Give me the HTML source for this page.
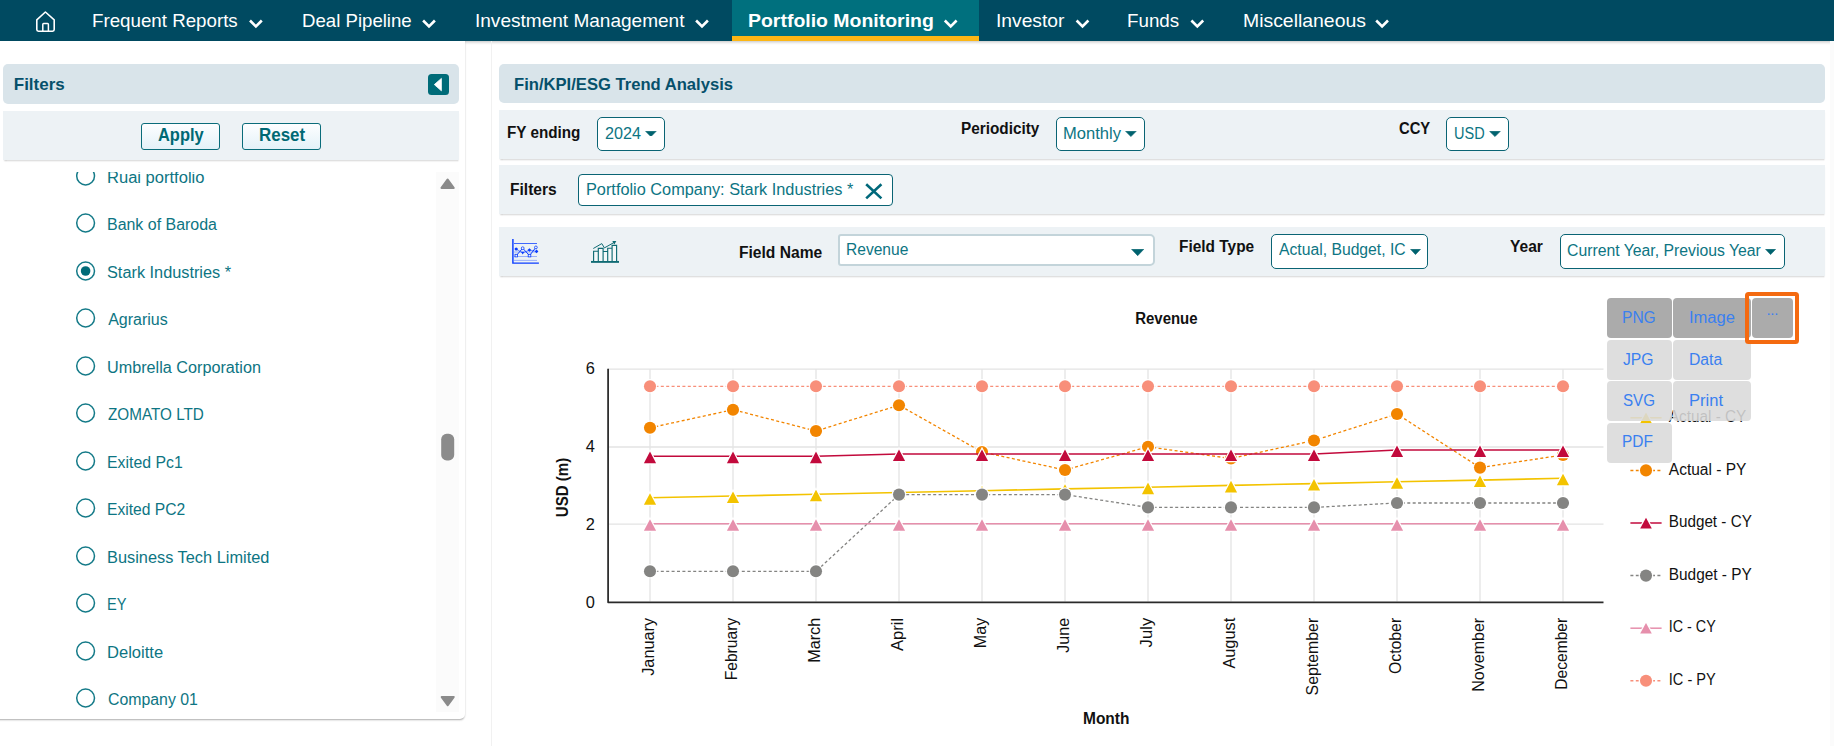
<!DOCTYPE html>
<html lang="en"><head><meta charset="utf-8"><title>Fin/KPI/ESG Trend Analysis</title>
<style>
html,body{margin:0;padding:0;background:#fff;}
body{width:1834px;height:746px;position:relative;overflow:hidden;font-family:"Liberation Sans", sans-serif;}
.tx{position:absolute;white-space:nowrap;z-index:2;transform-origin:0 0;}
.z3{z-index:5;}
.abs{position:absolute;box-sizing:border-box;}
#nav{left:0;top:0;width:1834px;height:40.6px;background:#004a61;box-shadow:0 1px 3px rgba(0,0,0,.25);}
#act{left:732px;top:0;width:247px;height:40.6px;background:#00707e;}
#actb{left:732px;top:36px;width:247px;height:4.7px;background:#fcb614;}
.hdr{background:#d9e4ea;border-radius:5px;}
.bar{background:#edf2f5;box-shadow:0 1.5px 1.5px -0.5px rgba(0,0,0,.2);}
.sel{background:#fff;border:1.5px solid #0a6474;border-radius:5px;}
.btn{border:1.3px solid #0a6c7a;border-radius:3px;background:linear-gradient(#fdfeff,#e4f1f8);}
.mi{border-radius:4px;z-index:4;}
</style></head><body>
<div id="nav" class="abs"></div><div id="act" class="abs"></div><div id="actb" class="abs"></div>
<svg width="1834" height="42" viewBox="0 0 1834 42" style="position:absolute;left:0;top:0"><path d="M36.8 19.8L45.4 12L54.2 19.8V29.6Q54.2 31.2 52.6 31.2H38.4Q36.8 31.2 36.8 29.6Z" fill="none" stroke="#fff" stroke-width="1.6" stroke-linejoin="round"/><path d="M42.8 31V24.4Q42.8 23.6 43.6 23.6H47.6Q48.4 23.6 48.4 24.4V31" fill="none" stroke="#fff" stroke-width="1.5"/><path d="M250.0 20.5L255.9 26.4L261.8 20.5" fill="none" stroke="#fff" stroke-width="2.6" stroke-linejoin="miter"/><path d="M423.1 20.5L429.0 26.4L434.9 20.5" fill="none" stroke="#fff" stroke-width="2.6" stroke-linejoin="miter"/><path d="M696.1 20.5L702.0 26.4L707.9 20.5" fill="none" stroke="#fff" stroke-width="2.6" stroke-linejoin="miter"/><path d="M944.8 20.5L950.7 26.4L956.6 20.5" fill="none" stroke="#fff" stroke-width="2.6" stroke-linejoin="miter"/><path d="M1076.6 20.5L1082.5 26.4L1088.4 20.5" fill="none" stroke="#fff" stroke-width="2.6" stroke-linejoin="miter"/><path d="M1191.4 20.5L1197.3 26.4L1203.2 20.5" fill="none" stroke="#fff" stroke-width="2.6" stroke-linejoin="miter"/><path d="M1376.2 20.5L1382.1 26.4L1388.0 20.5" fill="none" stroke="#fff" stroke-width="2.6" stroke-linejoin="miter"/></svg>
<!-- left panel -->
<div class="abs" style="left:-4px;top:41px;width:469.3px;height:677.6px;background:#fff;border-radius:0 0 5px 0;box-shadow:0 2px 2px -1px rgba(0,0,0,.32), 1px 0 1.5px rgba(0,0,0,.06);"></div>
<div class="abs hdr" style="left:3px;top:64px;width:456.3px;height:39.8px;"></div>
<div class="abs" style="left:428px;top:74px;width:21.2px;height:21.2px;background:#006b78;border-radius:3.5px;"><svg width="21" height="21" viewBox="0 0 21 21" style="position:absolute;left:0;top:0"><path d="M13.4 4.4V16.8L6.3 10.6Z" fill="#fff" stroke="#fff" stroke-width="0.8" stroke-linejoin="round"/></svg></div>
<div class="abs bar" style="left:3px;top:110.8px;width:456.3px;height:49.2px;"></div>
<div class="abs btn" style="left:141px;top:123px;width:78.8px;height:26.8px;"></div>
<div class="abs btn" style="left:242.2px;top:123px;width:78.7px;height:26.8px;"></div>
<div id="list" class="abs" style="left:0;top:172px;width:436px;height:540px;overflow:hidden;">
<div class="abs" style="left:0;top:-172px;width:459px;height:746px;">
<svg style="position:absolute;left:75px;top:164.95px" width="22" height="22" viewBox="0 0 22 22"><circle cx="10.6" cy="11" r="8.9" fill="#fff" stroke="#147a88" stroke-width="1.5"/></svg><svg style="position:absolute;left:75px;top:212.45px" width="22" height="22" viewBox="0 0 22 22"><circle cx="10.6" cy="11" r="8.9" fill="#fff" stroke="#147a88" stroke-width="1.5"/></svg><svg style="position:absolute;left:75px;top:259.95px" width="22" height="22" viewBox="0 0 22 22"><circle cx="10.6" cy="11" r="8.9" fill="#fff" stroke="#147a88" stroke-width="1.5"/><circle cx="10.6" cy="11" r="4.8" fill="#006b78"/></svg><svg style="position:absolute;left:75px;top:307.45px" width="22" height="22" viewBox="0 0 22 22"><circle cx="10.6" cy="11" r="8.9" fill="#fff" stroke="#147a88" stroke-width="1.5"/></svg><svg style="position:absolute;left:75px;top:354.95px" width="22" height="22" viewBox="0 0 22 22"><circle cx="10.6" cy="11" r="8.9" fill="#fff" stroke="#147a88" stroke-width="1.5"/></svg><svg style="position:absolute;left:75px;top:402.45px" width="22" height="22" viewBox="0 0 22 22"><circle cx="10.6" cy="11" r="8.9" fill="#fff" stroke="#147a88" stroke-width="1.5"/></svg><svg style="position:absolute;left:75px;top:449.95px" width="22" height="22" viewBox="0 0 22 22"><circle cx="10.6" cy="11" r="8.9" fill="#fff" stroke="#147a88" stroke-width="1.5"/></svg><svg style="position:absolute;left:75px;top:497.45px" width="22" height="22" viewBox="0 0 22 22"><circle cx="10.6" cy="11" r="8.9" fill="#fff" stroke="#147a88" stroke-width="1.5"/></svg><svg style="position:absolute;left:75px;top:544.95px" width="22" height="22" viewBox="0 0 22 22"><circle cx="10.6" cy="11" r="8.9" fill="#fff" stroke="#147a88" stroke-width="1.5"/></svg><svg style="position:absolute;left:75px;top:592.45px" width="22" height="22" viewBox="0 0 22 22"><circle cx="10.6" cy="11" r="8.9" fill="#fff" stroke="#147a88" stroke-width="1.5"/></svg><svg style="position:absolute;left:75px;top:639.95px" width="22" height="22" viewBox="0 0 22 22"><circle cx="10.6" cy="11" r="8.9" fill="#fff" stroke="#147a88" stroke-width="1.5"/></svg><svg style="position:absolute;left:75px;top:687.45px" width="22" height="22" viewBox="0 0 22 22"><circle cx="10.6" cy="11" r="8.9" fill="#fff" stroke="#147a88" stroke-width="1.5"/></svg>
<span id="l0" class="tx" style="left:106.80px;top:169.81px;font-size:16px;line-height:16px;color:#0d7583;transform:scaleX(1.0336);">Ruai portfolio</span><span id="l1" class="tx" style="left:106.80px;top:216.71px;font-size:16px;line-height:16px;color:#0d7583;transform:scaleX(0.9967);">Bank of Baroda</span><span id="l2" class="tx" style="left:107.16px;top:264.86px;font-size:16px;line-height:16px;color:#0d7583;transform:scaleX(1.0184);">Stark Industries *</span><span id="l3" class="tx" style="left:108.20px;top:311.76px;font-size:16px;line-height:16px;color:#0d7583;">Agrarius</span><span id="l4" class="tx" style="left:106.90px;top:359.76px;font-size:16px;line-height:16px;color:#0d7583;transform:scaleX(1.0122);">Umbrella Corporation</span><span id="l5" class="tx" style="left:107.64px;top:406.81px;font-size:16px;line-height:16px;color:#0d7583;transform:scaleX(0.9541);">ZOMATO LTD</span><span id="l6" class="tx" style="left:106.80px;top:454.96px;font-size:16px;line-height:16px;color:#0d7583;transform:scaleX(0.9897);">Exited Pc1</span><span id="l7" class="tx" style="left:106.80px;top:502.46px;font-size:16px;line-height:16px;color:#0d7583;transform:scaleX(0.9776);">Exited PC2</span><span id="l8" class="tx" style="left:106.80px;top:549.96px;font-size:16px;line-height:16px;color:#0d7583;transform:scaleX(1.0219);">Business Tech Limited</span><span id="l9" class="tx" style="left:106.80px;top:597.36px;font-size:16px;line-height:16px;color:#0d7583;transform:scaleX(0.9155);">EY</span><span id="l10" class="tx" style="left:106.80px;top:644.96px;font-size:16px;line-height:16px;color:#0d7583;transform:scaleX(1.0341);">Deloitte</span><span id="l11" class="tx" style="left:107.74px;top:692.26px;font-size:16px;line-height:16px;color:#0d7583;transform:scaleX(0.9912);">Company 01</span>
</div></div>
<div class="abs" style="left:436.2px;top:172px;width:22.6px;height:539.7px;background:#fbfbfb;"></div>
<svg class="abs" style="left:436px;top:171px" width="24" height="548" viewBox="0 0 24 548"><path d="M5.6 17L11.6 8.6L17.6 17Z" fill="#8b8b8b" stroke="#8b8b8b" stroke-width="2.2" stroke-linejoin="round"/><path d="M5.8 526L11.7 534L17.6 526Z" fill="#8b8b8b" stroke="#8b8b8b" stroke-width="2.2" stroke-linejoin="round"/><rect x="5.2" y="262.8" width="13" height="26.6" rx="5.5" fill="#8b8b8b"/></svg>
<!-- right panel -->
<div class="abs" style="left:491.2px;top:41px;width:1px;height:705px;background:#f1f1f1;"></div>
<div class="abs" style="left:1829.7px;top:41px;width:5px;height:705px;background:#fbfbfb;"></div>
<div class="abs hdr" style="left:499px;top:64px;width:1326px;height:38.8px;"></div>
<div class="abs bar" style="left:499px;top:110.2px;width:1326px;height:48.4px;"></div>
<div class="abs bar" style="left:499px;top:165.2px;width:1326px;height:48.6px;"></div>
<div class="abs bar" style="left:499px;top:227.3px;width:1326px;height:48.4px;"></div>
<div class="abs sel" style="left:597px;top:117.2px;width:67.8px;height:33.5px;"></div><svg style="position:absolute;left:645.2px;top:130.6px" width="11.8" height="5.8" viewBox="0 0 11.8 5.8"><path d="M0.6 0.3H11.2L5.9 5.6Z" fill="#00626e" stroke="#00626e" stroke-width="0.6" stroke-linejoin="round"/></svg>
<div class="abs sel" style="left:1056.1px;top:117px;width:88.7px;height:33.8px;"></div><svg style="position:absolute;left:1125.3px;top:131.1px" width="11.8" height="5.8" viewBox="0 0 11.8 5.8"><path d="M0.6 0.3H11.2L5.9 5.6Z" fill="#00626e" stroke="#00626e" stroke-width="0.6" stroke-linejoin="round"/></svg>
<div class="abs sel" style="left:1446.1px;top:117px;width:62.8px;height:33.8px;"></div><svg style="position:absolute;left:1489.1px;top:131.1px" width="11.9" height="5.8" viewBox="0 0 11.9 5.8"><path d="M0.6 0.3H11.3L6.0 5.6Z" fill="#00626e" stroke="#00626e" stroke-width="0.6" stroke-linejoin="round"/></svg>
<div class="abs sel" style="left:578.3px;top:174px;width:314.5px;height:31.6px;border-width:1.4px;border-radius:4px;"></div>
<svg class="abs" style="left:864px;top:182px" width="20" height="18" viewBox="0 0 20 18"><path d="M2.2 2.2L17.4 16.4M17.4 2.2L2.2 16.4" stroke="#00687a" stroke-width="2.6" stroke-linecap="butt"/></svg>
<div class="abs" style="left:838px;top:234.2px;width:317px;height:32.3px;background:#fff;border:2px solid #c3d4da;border-radius:3px 5px 5px 3px;"></div><svg style="position:absolute;left:1130.6px;top:249.4px" width="13.4" height="6.9" viewBox="0 0 13.4 6.9"><path d="M0.6 0.3H12.8L6.7 6.7Z" fill="#00626e" stroke="#00626e" stroke-width="0.6" stroke-linejoin="round"/></svg>
<div class="abs sel" style="left:1271.1px;top:234px;width:156.9px;height:34.8px;"></div><svg style="position:absolute;left:1409.5px;top:248.8px" width="11.1" height="5.8" viewBox="0 0 11.1 5.8"><path d="M0.6 0.3H10.5L5.5 5.6Z" fill="#00626e" stroke="#00626e" stroke-width="0.6" stroke-linejoin="round"/></svg>
<div class="abs sel" style="left:1560.3px;top:234px;width:224.6px;height:34.8px;"></div><svg style="position:absolute;left:1765.4px;top:248.8px" width="11.2" height="5.8" viewBox="0 0 11.2 5.8"><path d="M0.6 0.3H10.6L5.6 5.6Z" fill="#00626e" stroke="#00626e" stroke-width="0.6" stroke-linejoin="round"/></svg>
<!-- chart type icons -->
<svg class="abs" style="left:510px;top:237px" width="31" height="29" viewBox="510 237 31 29"><path d="M512.9 239V263.1H538.9" fill="none" stroke="#0b3dff" stroke-width="1.45"/><path d="M514 243.5H537" stroke="#0b3dff" stroke-width="0.9" opacity=".85"/><path d="M514 252H537M514 256.5H537M514 260.4H537" stroke="#0b3dff" stroke-width="0.8" opacity=".45"/><path d="M516.3 255.6L522.7 248.2L529.5 255.6L535.9 247.4" fill="none" stroke="#0b3dff" stroke-width="1"/><path d="M516.2 249L522.7 253L529.4 250L536.6 251.4" fill="none" stroke="#0b3dff" stroke-width="0.8" opacity=".7"/><rect x="515" y="254.3" width="2.6" height="2.6" fill="#eef3f6" stroke="#0b3dff" stroke-width=".8"/><rect x="528.2" y="254.3" width="2.6" height="2.6" fill="#eef3f6" stroke="#0b3dff" stroke-width=".8"/><circle cx="522.7" cy="248.2" r="1.4" fill="#eef3f6" stroke="#0b3dff" stroke-width=".8"/><circle cx="535.9" cy="247.4" r="1.4" fill="#eef3f6" stroke="#0b3dff" stroke-width=".8"/><circle cx="516.2" cy="249" r="1.6" fill="#0b3dff"/><path d="M521 251.8H524.4L522.7 254.4Z" fill="#0b3dff"/><path d="M529.4 248.2L531.2 250L529.4 251.8L527.6 250Z" fill="#0b3dff"/><path d="M536.6 249.6L538.4 251.4L536.6 253.2L534.8 251.4Z" fill="#0b3dff"/></svg>
<svg class="abs" style="left:590px;top:239px" width="30" height="26" viewBox="590 239 30 26"><path d="M591 261.9H619" stroke="#0f6b73" stroke-width="1.9"/><path d="M593.6 261V251.2H598.3V261M598.3 261V248.3H603.1V261M603.1 261V251.5H607.7V261M607.7 261V248.2H612.1V261M612.1 261V245.3H616.6V261" fill="#f4f8f9" stroke="#0f6b73" stroke-width="1.15"/><path d="M593.3 248.5L601.8 243.6L604.4 247.9L614.4 242.3" fill="none" stroke="#0f6b73" stroke-width="1"/><path d="M612.3 241L616.3 241.1L614.4 244.4Z" fill="#0f6b73"/></svg>
<svg id="chart" width="1834" height="746" viewBox="0 0 1834 746" style="position:absolute;left:0;top:0;z-index:1" font-family="Liberation Sans, sans-serif">
<line x1="608" y1="369.1" x2="1603.5" y2="369.1" stroke="#e3e3e3" stroke-width="1.3"/>
<line x1="608" y1="447.0" x2="1603.5" y2="447.0" stroke="#e3e3e3" stroke-width="1.3"/>
<line x1="608" y1="524.1" x2="1603.5" y2="524.1" stroke="#e3e3e3" stroke-width="1.3"/>
<line x1="650" y1="369" x2="650" y2="601.5" stroke="#e3e3e3" stroke-width="1.3"/>
<line x1="733" y1="369" x2="733" y2="601.5" stroke="#e3e3e3" stroke-width="1.3"/>
<line x1="816" y1="369" x2="816" y2="601.5" stroke="#e3e3e3" stroke-width="1.3"/>
<line x1="899" y1="369" x2="899" y2="601.5" stroke="#e3e3e3" stroke-width="1.3"/>
<line x1="982" y1="369" x2="982" y2="601.5" stroke="#e3e3e3" stroke-width="1.3"/>
<line x1="1065" y1="369" x2="1065" y2="601.5" stroke="#e3e3e3" stroke-width="1.3"/>
<line x1="1148" y1="369" x2="1148" y2="601.5" stroke="#e3e3e3" stroke-width="1.3"/>
<line x1="1231" y1="369" x2="1231" y2="601.5" stroke="#e3e3e3" stroke-width="1.3"/>
<line x1="1314" y1="369" x2="1314" y2="601.5" stroke="#e3e3e3" stroke-width="1.3"/>
<line x1="1397" y1="369" x2="1397" y2="601.5" stroke="#e3e3e3" stroke-width="1.3"/>
<line x1="1480" y1="369" x2="1480" y2="601.5" stroke="#e3e3e3" stroke-width="1.3"/>
<line x1="1563" y1="369" x2="1563" y2="601.5" stroke="#e3e3e3" stroke-width="1.3"/>
<polyline points="650.0,497.8 733.0,496.0 816.0,494.3 899.0,492.5 982.0,490.7 1065.0,488.9 1148.0,487.2 1231.0,485.4 1314.0,483.6 1397.0,481.8 1480.0,480.1 1563.0,478.3" fill="none" stroke="#f3c300" stroke-width="1.6"/>
<path d="M650.0 493.2L656.1 504.8L643.9 504.8Z" fill="#f3c300" stroke="#fff" stroke-width="2.4" paint-order="stroke" stroke-linejoin="miter"/>
<path d="M733.0 491.4L739.1 503.0L726.9 503.0Z" fill="#f3c300" stroke="#fff" stroke-width="2.4" paint-order="stroke" stroke-linejoin="miter"/>
<path d="M816.0 489.7L822.1 501.3L809.9 501.3Z" fill="#f3c300" stroke="#fff" stroke-width="2.4" paint-order="stroke" stroke-linejoin="miter"/>
<path d="M899.0 487.9L905.1 499.5L892.9 499.5Z" fill="#f3c300" stroke="#fff" stroke-width="2.4" paint-order="stroke" stroke-linejoin="miter"/>
<path d="M982.0 486.1L988.1 497.7L975.9 497.7Z" fill="#f3c300" stroke="#fff" stroke-width="2.4" paint-order="stroke" stroke-linejoin="miter"/>
<path d="M1065.0 484.3L1071.1 495.9L1058.9 495.9Z" fill="#f3c300" stroke="#fff" stroke-width="2.4" paint-order="stroke" stroke-linejoin="miter"/>
<path d="M1148.0 482.6L1154.1 494.2L1141.9 494.2Z" fill="#f3c300" stroke="#fff" stroke-width="2.4" paint-order="stroke" stroke-linejoin="miter"/>
<path d="M1231.0 480.8L1237.1 492.4L1224.9 492.4Z" fill="#f3c300" stroke="#fff" stroke-width="2.4" paint-order="stroke" stroke-linejoin="miter"/>
<path d="M1314.0 479.0L1320.1 490.6L1307.9 490.6Z" fill="#f3c300" stroke="#fff" stroke-width="2.4" paint-order="stroke" stroke-linejoin="miter"/>
<path d="M1397.0 477.2L1403.1 488.8L1390.9 488.8Z" fill="#f3c300" stroke="#fff" stroke-width="2.4" paint-order="stroke" stroke-linejoin="miter"/>
<path d="M1480.0 475.5L1486.1 487.1L1473.9 487.1Z" fill="#f3c300" stroke="#fff" stroke-width="2.4" paint-order="stroke" stroke-linejoin="miter"/>
<path d="M1563.0 473.7L1569.1 485.3L1556.9 485.3Z" fill="#f3c300" stroke="#fff" stroke-width="2.4" paint-order="stroke" stroke-linejoin="miter"/>
<polyline points="650.0,427.8 733.0,409.7 816.0,431.0 899.0,405.2 982.0,452.0 1065.0,470.0 1148.0,446.8 1231.0,458.5 1314.0,440.5 1397.0,414.0 1480.0,467.6 1563.0,455.0" fill="none" stroke="#f28500" stroke-width="1.3" stroke-dasharray="3 2.4"/>
<circle cx="650.0" cy="427.8" r="6.05" fill="#f28500" stroke="#fff" stroke-width="2.4" paint-order="stroke"/>
<circle cx="733.0" cy="409.7" r="6.05" fill="#f28500" stroke="#fff" stroke-width="2.4" paint-order="stroke"/>
<circle cx="816.0" cy="431.0" r="6.05" fill="#f28500" stroke="#fff" stroke-width="2.4" paint-order="stroke"/>
<circle cx="899.0" cy="405.2" r="6.05" fill="#f28500" stroke="#fff" stroke-width="2.4" paint-order="stroke"/>
<circle cx="982.0" cy="452.0" r="6.05" fill="#f28500" stroke="#fff" stroke-width="2.4" paint-order="stroke"/>
<circle cx="1065.0" cy="470.0" r="6.05" fill="#f28500" stroke="#fff" stroke-width="2.4" paint-order="stroke"/>
<circle cx="1148.0" cy="446.8" r="6.05" fill="#f28500" stroke="#fff" stroke-width="2.4" paint-order="stroke"/>
<circle cx="1231.0" cy="458.5" r="6.05" fill="#f28500" stroke="#fff" stroke-width="2.4" paint-order="stroke"/>
<circle cx="1314.0" cy="440.5" r="6.05" fill="#f28500" stroke="#fff" stroke-width="2.4" paint-order="stroke"/>
<circle cx="1397.0" cy="414.0" r="6.05" fill="#f28500" stroke="#fff" stroke-width="2.4" paint-order="stroke"/>
<circle cx="1480.0" cy="467.6" r="6.05" fill="#f28500" stroke="#fff" stroke-width="2.4" paint-order="stroke"/>
<circle cx="1563.0" cy="455.0" r="6.05" fill="#f28500" stroke="#fff" stroke-width="2.4" paint-order="stroke"/>
<polyline points="650.0,456.2 733.0,456.2 816.0,456.2 899.0,454.0 982.0,454.0 1065.0,454.0 1148.0,454.0 1231.0,454.0 1314.0,454.0 1397.0,450.0 1480.0,450.0 1563.0,450.0" fill="none" stroke="#c20a3c" stroke-width="1.6"/>
<path d="M650.0 451.6L656.1 463.2L643.9 463.2Z" fill="#c20a3c" stroke="#fff" stroke-width="2.4" paint-order="stroke" stroke-linejoin="miter"/>
<path d="M733.0 451.6L739.1 463.2L726.9 463.2Z" fill="#c20a3c" stroke="#fff" stroke-width="2.4" paint-order="stroke" stroke-linejoin="miter"/>
<path d="M816.0 451.6L822.1 463.2L809.9 463.2Z" fill="#c20a3c" stroke="#fff" stroke-width="2.4" paint-order="stroke" stroke-linejoin="miter"/>
<path d="M899.0 449.4L905.1 461.0L892.9 461.0Z" fill="#c20a3c" stroke="#fff" stroke-width="2.4" paint-order="stroke" stroke-linejoin="miter"/>
<path d="M982.0 449.4L988.1 461.0L975.9 461.0Z" fill="#c20a3c" stroke="#fff" stroke-width="2.4" paint-order="stroke" stroke-linejoin="miter"/>
<path d="M1065.0 449.4L1071.1 461.0L1058.9 461.0Z" fill="#c20a3c" stroke="#fff" stroke-width="2.4" paint-order="stroke" stroke-linejoin="miter"/>
<path d="M1148.0 449.4L1154.1 461.0L1141.9 461.0Z" fill="#c20a3c" stroke="#fff" stroke-width="2.4" paint-order="stroke" stroke-linejoin="miter"/>
<path d="M1231.0 449.4L1237.1 461.0L1224.9 461.0Z" fill="#c20a3c" stroke="#fff" stroke-width="2.4" paint-order="stroke" stroke-linejoin="miter"/>
<path d="M1314.0 449.4L1320.1 461.0L1307.9 461.0Z" fill="#c20a3c" stroke="#fff" stroke-width="2.4" paint-order="stroke" stroke-linejoin="miter"/>
<path d="M1397.0 445.4L1403.1 457.0L1390.9 457.0Z" fill="#c20a3c" stroke="#fff" stroke-width="2.4" paint-order="stroke" stroke-linejoin="miter"/>
<path d="M1480.0 445.4L1486.1 457.0L1473.9 457.0Z" fill="#c20a3c" stroke="#fff" stroke-width="2.4" paint-order="stroke" stroke-linejoin="miter"/>
<path d="M1563.0 445.4L1569.1 457.0L1556.9 457.0Z" fill="#c20a3c" stroke="#fff" stroke-width="2.4" paint-order="stroke" stroke-linejoin="miter"/>
<polyline points="650.0,571.3 733.0,571.3 816.0,571.3 899.0,494.6 982.0,494.6 1065.0,494.6 1148.0,507.4 1231.0,507.4 1314.0,507.4 1397.0,503.0 1480.0,503.0 1563.0,503.0" fill="none" stroke="#848482" stroke-width="1.3" stroke-dasharray="3 2.4"/>
<circle cx="650.0" cy="571.3" r="6.05" fill="#848482" stroke="#fff" stroke-width="2.4" paint-order="stroke"/>
<circle cx="733.0" cy="571.3" r="6.05" fill="#848482" stroke="#fff" stroke-width="2.4" paint-order="stroke"/>
<circle cx="816.0" cy="571.3" r="6.05" fill="#848482" stroke="#fff" stroke-width="2.4" paint-order="stroke"/>
<circle cx="899.0" cy="494.6" r="6.05" fill="#848482" stroke="#fff" stroke-width="2.4" paint-order="stroke"/>
<circle cx="982.0" cy="494.6" r="6.05" fill="#848482" stroke="#fff" stroke-width="2.4" paint-order="stroke"/>
<circle cx="1065.0" cy="494.6" r="6.05" fill="#848482" stroke="#fff" stroke-width="2.4" paint-order="stroke"/>
<circle cx="1148.0" cy="507.4" r="6.05" fill="#848482" stroke="#fff" stroke-width="2.4" paint-order="stroke"/>
<circle cx="1231.0" cy="507.4" r="6.05" fill="#848482" stroke="#fff" stroke-width="2.4" paint-order="stroke"/>
<circle cx="1314.0" cy="507.4" r="6.05" fill="#848482" stroke="#fff" stroke-width="2.4" paint-order="stroke"/>
<circle cx="1397.0" cy="503.0" r="6.05" fill="#848482" stroke="#fff" stroke-width="2.4" paint-order="stroke"/>
<circle cx="1480.0" cy="503.0" r="6.05" fill="#848482" stroke="#fff" stroke-width="2.4" paint-order="stroke"/>
<circle cx="1563.0" cy="503.0" r="6.05" fill="#848482" stroke="#fff" stroke-width="2.4" paint-order="stroke"/>
<polyline points="650.0,523.8 733.0,523.8 816.0,523.8 899.0,523.8 982.0,523.8 1065.0,523.8 1148.0,523.8 1231.0,523.8 1314.0,523.8 1397.0,523.8 1480.0,523.8 1563.0,523.8" fill="none" stroke="#e68fac" stroke-width="1.6"/>
<path d="M650.0 519.2L656.1 530.8L643.9 530.8Z" fill="#e68fac" stroke="#fff" stroke-width="2.4" paint-order="stroke" stroke-linejoin="miter"/>
<path d="M733.0 519.2L739.1 530.8L726.9 530.8Z" fill="#e68fac" stroke="#fff" stroke-width="2.4" paint-order="stroke" stroke-linejoin="miter"/>
<path d="M816.0 519.2L822.1 530.8L809.9 530.8Z" fill="#e68fac" stroke="#fff" stroke-width="2.4" paint-order="stroke" stroke-linejoin="miter"/>
<path d="M899.0 519.2L905.1 530.8L892.9 530.8Z" fill="#e68fac" stroke="#fff" stroke-width="2.4" paint-order="stroke" stroke-linejoin="miter"/>
<path d="M982.0 519.2L988.1 530.8L975.9 530.8Z" fill="#e68fac" stroke="#fff" stroke-width="2.4" paint-order="stroke" stroke-linejoin="miter"/>
<path d="M1065.0 519.2L1071.1 530.8L1058.9 530.8Z" fill="#e68fac" stroke="#fff" stroke-width="2.4" paint-order="stroke" stroke-linejoin="miter"/>
<path d="M1148.0 519.2L1154.1 530.8L1141.9 530.8Z" fill="#e68fac" stroke="#fff" stroke-width="2.4" paint-order="stroke" stroke-linejoin="miter"/>
<path d="M1231.0 519.2L1237.1 530.8L1224.9 530.8Z" fill="#e68fac" stroke="#fff" stroke-width="2.4" paint-order="stroke" stroke-linejoin="miter"/>
<path d="M1314.0 519.2L1320.1 530.8L1307.9 530.8Z" fill="#e68fac" stroke="#fff" stroke-width="2.4" paint-order="stroke" stroke-linejoin="miter"/>
<path d="M1397.0 519.2L1403.1 530.8L1390.9 530.8Z" fill="#e68fac" stroke="#fff" stroke-width="2.4" paint-order="stroke" stroke-linejoin="miter"/>
<path d="M1480.0 519.2L1486.1 530.8L1473.9 530.8Z" fill="#e68fac" stroke="#fff" stroke-width="2.4" paint-order="stroke" stroke-linejoin="miter"/>
<path d="M1563.0 519.2L1569.1 530.8L1556.9 530.8Z" fill="#e68fac" stroke="#fff" stroke-width="2.4" paint-order="stroke" stroke-linejoin="miter"/>
<polyline points="650.0,386.3 733.0,386.3 816.0,386.3 899.0,386.3 982.0,386.3 1065.0,386.3 1148.0,386.3 1231.0,386.3 1314.0,386.3 1397.0,386.3 1480.0,386.3 1563.0,386.3" fill="none" stroke="#f88f7a" stroke-width="1.3" stroke-dasharray="3 2.4"/>
<circle cx="650.0" cy="386.3" r="6.05" fill="#f88f7a" stroke="#fff" stroke-width="2.4" paint-order="stroke"/>
<circle cx="733.0" cy="386.3" r="6.05" fill="#f88f7a" stroke="#fff" stroke-width="2.4" paint-order="stroke"/>
<circle cx="816.0" cy="386.3" r="6.05" fill="#f88f7a" stroke="#fff" stroke-width="2.4" paint-order="stroke"/>
<circle cx="899.0" cy="386.3" r="6.05" fill="#f88f7a" stroke="#fff" stroke-width="2.4" paint-order="stroke"/>
<circle cx="982.0" cy="386.3" r="6.05" fill="#f88f7a" stroke="#fff" stroke-width="2.4" paint-order="stroke"/>
<circle cx="1065.0" cy="386.3" r="6.05" fill="#f88f7a" stroke="#fff" stroke-width="2.4" paint-order="stroke"/>
<circle cx="1148.0" cy="386.3" r="6.05" fill="#f88f7a" stroke="#fff" stroke-width="2.4" paint-order="stroke"/>
<circle cx="1231.0" cy="386.3" r="6.05" fill="#f88f7a" stroke="#fff" stroke-width="2.4" paint-order="stroke"/>
<circle cx="1314.0" cy="386.3" r="6.05" fill="#f88f7a" stroke="#fff" stroke-width="2.4" paint-order="stroke"/>
<circle cx="1397.0" cy="386.3" r="6.05" fill="#f88f7a" stroke="#fff" stroke-width="2.4" paint-order="stroke"/>
<circle cx="1480.0" cy="386.3" r="6.05" fill="#f88f7a" stroke="#fff" stroke-width="2.4" paint-order="stroke"/>
<circle cx="1563.0" cy="386.3" r="6.05" fill="#f88f7a" stroke="#fff" stroke-width="2.4" paint-order="stroke"/>
<path d="M608.1 368.7V602.3H1603.5" fill="none" stroke="#2a2a2a" stroke-width="1.75" stroke-linejoin="round"/>
<text x="594.9" y="373.9" text-anchor="end" font-size="16.4" fill="#111">6</text>
<text x="594.9" y="451.8" text-anchor="end" font-size="16.4" fill="#111">4</text>
<text x="594.9" y="530.0" text-anchor="end" font-size="16.4" fill="#111">2</text>
<text x="594.9" y="607.8" text-anchor="end" font-size="16.4" fill="#111">0</text>
<text transform="translate(654.2 617.8) rotate(-90)" text-anchor="end" font-size="16" fill="#111" textLength="58" lengthAdjust="spacingAndGlyphs">January</text>
<text transform="translate(737.2 617.8) rotate(-90)" text-anchor="end" font-size="16" fill="#111" textLength="62.5" lengthAdjust="spacingAndGlyphs">February</text>
<text transform="translate(820.2 617.8) rotate(-90)" text-anchor="end" font-size="16" fill="#111" textLength="45" lengthAdjust="spacingAndGlyphs">March</text>
<text transform="translate(903.2 617.8) rotate(-90)" text-anchor="end" font-size="16" fill="#111" textLength="33.3" lengthAdjust="spacingAndGlyphs">April</text>
<text transform="translate(986.2 617.8) rotate(-90)" text-anchor="end" font-size="16" fill="#111" textLength="30.4" lengthAdjust="spacingAndGlyphs">May</text>
<text transform="translate(1069.2 617.8) rotate(-90)" text-anchor="end" font-size="16" fill="#111" textLength="35" lengthAdjust="spacingAndGlyphs">June</text>
<text transform="translate(1152.2 617.8) rotate(-90)" text-anchor="end" font-size="16" fill="#111" textLength="29.6" lengthAdjust="spacingAndGlyphs">July</text>
<text transform="translate(1235.2 617.8) rotate(-90)" text-anchor="end" font-size="16" fill="#111" textLength="50.8" lengthAdjust="spacingAndGlyphs">August</text>
<text transform="translate(1318.2 617.8) rotate(-90)" text-anchor="end" font-size="16" fill="#111" textLength="77.6" lengthAdjust="spacingAndGlyphs">September</text>
<text transform="translate(1401.2 617.8) rotate(-90)" text-anchor="end" font-size="16" fill="#111" textLength="56.3" lengthAdjust="spacingAndGlyphs">October</text>
<text transform="translate(1484.2 617.8) rotate(-90)" text-anchor="end" font-size="16" fill="#111" textLength="74" lengthAdjust="spacingAndGlyphs">November</text>
<text transform="translate(1567.2 617.8) rotate(-90)" text-anchor="end" font-size="16" fill="#111" textLength="72" lengthAdjust="spacingAndGlyphs">December</text>
<text transform="translate(567.5 487.5) rotate(-90)" text-anchor="middle" font-size="16" font-weight="700" fill="#111" textLength="59.5" lengthAdjust="spacingAndGlyphs">USD (m)</text>
<text x="1083" y="724" font-size="16" font-weight="700" fill="#111" textLength="46.4" lengthAdjust="spacingAndGlyphs">Month</text>
<text x="1135.2" y="323.9" font-size="16" font-weight="700" fill="#111" textLength="62.4" lengthAdjust="spacingAndGlyphs">Revenue</text>
<line x1="1630.4" y1="417.79999999999995" x2="1661.6" y2="417.79999999999995" stroke="#f3c300" stroke-width="1.5"/>
<path d="M1646.0 412.6L1651.8 423.2L1640.2 423.2Z" fill="#f3c300" stroke="#fff" stroke-width="2.4" paint-order="stroke"/>
<text x="1668.8" y="422.0" font-size="16" fill="#111" textLength="77.5" lengthAdjust="spacingAndGlyphs">Actual - CY</text>
<line x1="1630.4" y1="470.4" x2="1661.6" y2="470.4" stroke="#f28500" stroke-width="1.5" stroke-dasharray="3 2.4"/>
<circle cx="1646.0" cy="470.4" r="6.05" fill="#f28500" stroke="#fff" stroke-width="2.4" paint-order="stroke"/>
<text x="1668.8" y="474.6" font-size="16" fill="#111" textLength="77.5" lengthAdjust="spacingAndGlyphs">Actual - PY</text>
<line x1="1630.4" y1="523.0" x2="1661.6" y2="523.0" stroke="#c20a3c" stroke-width="1.5"/>
<path d="M1646.0 517.8L1651.8 528.4L1640.2 528.4Z" fill="#c20a3c" stroke="#fff" stroke-width="2.4" paint-order="stroke"/>
<text x="1668.8" y="527.2" font-size="16" fill="#111" textLength="83" lengthAdjust="spacingAndGlyphs">Budget - CY</text>
<line x1="1630.4" y1="575.6" x2="1661.6" y2="575.6" stroke="#848482" stroke-width="1.5" stroke-dasharray="3 2.4"/>
<circle cx="1646.0" cy="575.6" r="6.05" fill="#848482" stroke="#fff" stroke-width="2.4" paint-order="stroke"/>
<text x="1668.8" y="579.8" font-size="16" fill="#111" textLength="83" lengthAdjust="spacingAndGlyphs">Budget - PY</text>
<line x1="1630.4" y1="628.1999999999999" x2="1661.6" y2="628.1999999999999" stroke="#e68fac" stroke-width="1.5"/>
<path d="M1646.0 623.0L1651.8 633.6L1640.2 633.6Z" fill="#e68fac" stroke="#fff" stroke-width="2.4" paint-order="stroke"/>
<text x="1668.8" y="632.4" font-size="16" fill="#111" textLength="47" lengthAdjust="spacingAndGlyphs">IC - CY</text>
<line x1="1630.4" y1="680.8" x2="1661.6" y2="680.8" stroke="#f88f7a" stroke-width="1.5" stroke-dasharray="3 2.4"/>
<circle cx="1646.0" cy="680.8" r="6.05" fill="#f88f7a" stroke="#fff" stroke-width="2.4" paint-order="stroke"/>
<text x="1668.8" y="685.0" font-size="16" fill="#111" textLength="47" lengthAdjust="spacingAndGlyphs">IC - PY</text>
</svg>
<!-- export menu -->
<div class="abs mi" style="left:1607px;top:298px;width:64.8px;height:39.8px;background:#ababab;"></div>
<div class="abs mi" style="left:1673px;top:298px;width:77.8px;height:39.8px;background:#ababab;"></div>
<div class="abs mi" style="left:1752.2px;top:298px;width:40.8px;height:39.8px;background:#ababab;"></div>
<div class="abs" style="left:1745px;top:292px;width:54px;height:52px;border:4.4px solid #f46a10;border-radius:3.5px;z-index:6;"></div>
<div class="abs mi" style="left:1607px;top:339.8px;width:64.8px;height:39.9px;background:rgba(217,217,217,.88);"></div>
<div class="abs mi" style="left:1673px;top:339.8px;width:77.8px;height:39.9px;background:rgba(217,217,217,.88);"></div>
<div class="abs mi" style="left:1607px;top:381.4px;width:64.8px;height:40px;background:rgba(217,217,217,.88);"></div>
<div class="abs mi" style="left:1673px;top:381.4px;width:77.8px;height:40px;background:rgba(217,217,217,.88);"></div>
<div class="abs mi" style="left:1607px;top:423px;width:64.8px;height:40.4px;background:rgba(217,217,217,.88);"></div>
<span class="tx z3" style="left:1766.6px;top:302px;font-size:15px;line-height:16px;color:#3a80f0;letter-spacing:-0.4px;">...</span>
<span id="t0" class="tx" style="left:92.05px;top:11.54px;font-size:18.5px;line-height:18.5px;color:#fff;transform:scaleX(1.0122);">Frequent Reports</span><span id="t1" class="tx" style="left:301.85px;top:11.54px;font-size:18.5px;line-height:18.5px;color:#fff;transform:scaleX(1.0065);">Deal Pipeline</span><span id="t2" class="tx" style="left:474.90px;top:11.54px;font-size:18.5px;line-height:18.5px;color:#fff;transform:scaleX(1.0289);">Investment Management</span><span id="t3" class="tx" style="left:747.72px;top:11.12px;font-size:19px;line-height:19px;color:#fff;font-weight:700;transform:scaleX(1.0238);">Portfolio Monitoring</span><span id="t4" class="tx" style="left:995.91px;top:11.54px;font-size:18.5px;line-height:18.5px;color:#fff;transform:scaleX(1.0394);">Investor</span><span id="t5" class="tx" style="left:1127.08px;top:11.54px;font-size:18.5px;line-height:18.5px;color:#fff;transform:scaleX(1.0148);">Funds</span><span id="t6" class="tx" style="left:1242.65px;top:11.54px;font-size:18.5px;line-height:18.5px;color:#fff;transform:scaleX(1.0487);">Miscellaneous</span><span id="t7" class="tx" style="left:13.78px;top:76.01px;font-size:17px;line-height:17px;color:#06506b;font-weight:700;">Filters</span><span id="t8" class="tx" style="left:513.78px;top:76.01px;font-size:17px;line-height:17px;color:#06506b;font-weight:700;transform:scaleX(0.977);">Fin/KPI/ESG Trend Analysis</span><span id="t9" class="tx" style="left:157.59px;top:126.69px;font-size:17.5px;line-height:17.5px;color:#006874;font-weight:700;transform:scaleX(0.9381);">Apply</span><span id="t10" class="tx" style="left:258.70px;top:126.69px;font-size:17.5px;line-height:17.5px;color:#006874;font-weight:700;transform:scaleX(0.9679);">Reset</span><span id="t11" class="tx" style="left:506.85px;top:125.46px;font-size:16px;line-height:16px;color:#111;font-weight:700;transform:scaleX(0.9528);">FY ending</span><span id="t12" class="tx" style="left:604.80px;top:126.46px;font-size:16px;line-height:16px;color:#0d7583;transform:scaleX(1.0103);">2024</span><span id="t13" class="tx" style="left:960.85px;top:121.46px;font-size:16px;line-height:16px;color:#111;font-weight:700;transform:scaleX(0.9571);">Periodicity</span><span id="t14" class="tx" style="left:1063.01px;top:126.46px;font-size:16px;line-height:16px;color:#0d7583;transform:scaleX(1.0341);">Monthly</span><span id="t15" class="tx" style="left:1398.79px;top:121.46px;font-size:16px;line-height:16px;color:#111;font-weight:700;transform:scaleX(0.9227);">CCY</span><span id="t16" class="tx" style="left:1453.53px;top:126.46px;font-size:16px;line-height:16px;color:#0d7583;transform:scaleX(0.9077);">USD</span><span id="t17" class="tx" style="left:509.85px;top:182.46px;font-size:16px;line-height:16px;color:#111;font-weight:700;transform:scaleX(0.9714);">Filters</span><span id="t18" class="tx" style="left:585.80px;top:182.46px;font-size:16px;line-height:16px;color:#0d7583;transform:scaleX(1.019);">Portfolio Company: Stark Industries *</span><span id="t19" class="tx" style="left:738.82px;top:245.06px;font-size:16px;line-height:16px;color:#111;font-weight:700;transform:scaleX(0.9742);">Field Name</span><span id="t20" class="tx" style="left:846.43px;top:242.46px;font-size:16px;line-height:16px;color:#0d7583;transform:scaleX(0.9728);">Revenue</span><span id="t21" class="tx" style="left:1179.39px;top:238.86px;font-size:16px;line-height:16px;color:#111;font-weight:700;transform:scaleX(0.9642);">Field Type</span><span id="t22" class="tx" style="left:1278.63px;top:241.96px;font-size:16px;line-height:16px;color:#0d7583;transform:scaleX(0.9822);">Actual, Budget, IC</span><span id="t23" class="tx" style="left:1510.13px;top:239.06px;font-size:16px;line-height:16px;color:#111;font-weight:700;transform:scaleX(0.9719);">Year</span><span id="t24" class="tx" style="left:1566.99px;top:242.66px;font-size:16px;line-height:16px;color:#0d7583;transform:scaleX(0.986);">Current Year, Previous Year</span><span id="t25" class="tx z3" style="left:1622.23px;top:309.66px;font-size:16px;line-height:16px;color:#3a80f0;transform:scaleX(0.9726);">PNG</span><span id="t26" class="tx z3" style="left:1688.89px;top:309.66px;font-size:16px;line-height:16px;color:#3a80f0;transform:scaleX(1.0327);">Image</span><span id="t27" class="tx z3" style="left:1622.57px;top:351.86px;font-size:16px;line-height:16px;color:#3a80f0;transform:scaleX(0.9817);">JPG</span><span id="t28" class="tx z3" style="left:1689.04px;top:351.86px;font-size:16px;line-height:16px;color:#3a80f0;transform:scaleX(0.9822);">Data</span><span id="t29" class="tx z3" style="left:1622.55px;top:393.26px;font-size:16px;line-height:16px;color:#3a80f0;transform:scaleX(0.9463);">SVG</span><span id="t30" class="tx z3" style="left:1689.10px;top:393.26px;font-size:16px;line-height:16px;color:#3a80f0;transform:scaleX(1.0339);">Print</span><span id="t31" class="tx z3" style="left:1622.23px;top:434.36px;font-size:16px;line-height:16px;color:#3a80f0;transform:scaleX(0.9636);">PDF</span>
</body></html>
